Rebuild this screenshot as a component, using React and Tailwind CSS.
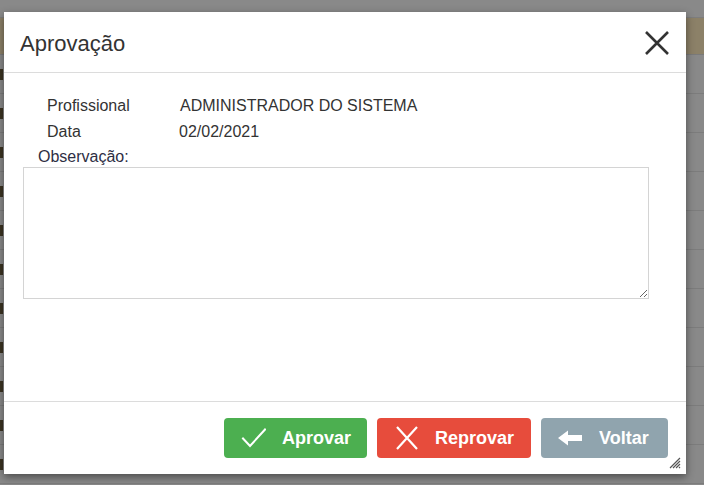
import { useState } from "react";

const rows = Array.from({ length: 11 });

function CheckIcon() {
  return (
    <svg width="25" height="22" viewBox="0 0 25 22" fill="none">
      <path d="M2 11.5 L9 19 L24 2.5" stroke="white" strokeWidth="2" strokeLinecap="square" />
    </svg>
  );
}

function CrossIcon() {
  return (
    <svg width="24" height="26" viewBox="0 0 24 26" fill="none">
      <path d="M2 2 L22 24 M22 2 L2 24" stroke="white" strokeWidth="2.2" />
    </svg>
  );
}

function ArrowIcon() {
  return (
    <svg width="25" height="16" viewBox="0 0 25 16" fill="white">
      <path d="M0 8 L10 0.5 L10 5 L24 5 L24 11 L10 11 L10 15.5 Z" />
    </svg>
  );
}

export default function App() {
  const [obs, setObs] = useState("");

  return (
    <div
      className="relative w-[704px] h-[485px] overflow-hidden bg-[#898989]"
      style={{ fontFamily: "'Liberation Sans', Arial, sans-serif" }}
    >
      {/* grid behind the overlay */}
      <div className="flex flex-col">
        <div className="h-[18px] border-b border-[#7d7d7d]" />
        <div className="h-[37px] bg-[#8c8168] border-b border-[#7a7a7a]" />
        {rows.map((_, i) => (
          <div key={i} className="h-[39px] flex items-center border-b border-[#7c7c7c]">
            <div className="w-[3px] h-[11px] bg-[#3b3322]" />
          </div>
        ))}
      </div>

      {/* modal */}
      <div className="absolute left-[4px] top-[12px] w-[682px] h-[462px] bg-white flex flex-col shadow-[0_3px_8px_rgba(0,0,0,0.45)]">
        <div className="h-[61px] flex items-center justify-between pl-[16px] pr-[16px] border-b border-[#dcdcdc]">
          <h1 className="text-[22px] text-[#333] mt-[2px]">Aprovação</h1>
          <button className="w-[26px] h-[26px] mt-[2px]">
            <svg width="26" height="26" viewBox="0 0 26 26" fill="none">
              <path d="M2 2 L24 24 M24 2 L2 24" stroke="#333" strokeWidth="2.6" />
            </svg>
          </button>
        </div>

        <div className="flex-1 pt-[20px] text-[16px] text-[#333]">
          <div className="flex h-[26px] items-center pl-[43px]">
            <span className="w-[133px]">Profissional</span>
            <span>ADMINISTRADOR DO SISTEMA</span>
          </div>
          <div className="flex h-[26px] items-center pl-[43px]">
            <span className="w-[132px]">Data</span>
            <span>02/02/2021</span>
          </div>
          <div className="mt-[1px] h-[21px] leading-[21px] pl-[34px] text-[#2e2e44]">Observação:</div>
          <textarea
            value={obs}
            onChange={(e) => setObs(e.target.value)}
            className="block ml-[19px] w-[626px] h-[132px] border border-[#d4d4d4] outline-none resize"
          />
        </div>

        <div className="h-[73px] border-t border-[#dcdcdc] flex justify-end items-start pt-[16px] pr-[18px] gap-[10px] relative">
          <button className="h-[40px] w-[143px] rounded-[4px] bg-[#4caf50] flex items-center pl-[17px] gap-4 text-white font-bold text-[18px]">
            <CheckIcon />
            <span>Aprovar</span>
          </button>
          <button className="h-[40px] w-[154px] rounded-[4px] bg-[#e74c3c] flex items-center pl-[18px] gap-4 text-white font-bold text-[18px]">
            <CrossIcon />
            <span>Reprovar</span>
          </button>
          <button className="h-[40px] w-[127px] rounded-[4px] bg-[#90a4ae] flex items-center pl-[17px] gap-4 text-white font-bold text-[18px]">
            <ArrowIcon />
            <span>Voltar</span>
          </button>
          <svg className="absolute right-[5px] bottom-[5px]" width="12" height="12" viewBox="0 0 12 12">
            <path d="M11 1 L1 11 M11 4 L4 11 M11 7 L7 11 M11 10 L10 11" stroke="#555" strokeWidth="1.2" />
          </svg>
        </div>
      </div>
    </div>
  );
}
